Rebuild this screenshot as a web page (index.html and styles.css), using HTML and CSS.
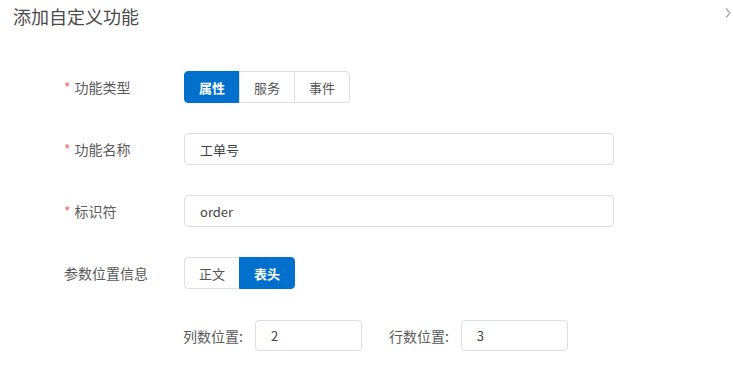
FILE: index.html
```html
<!DOCTYPE html>
<html lang="zh-CN">
<head>
    <meta charset="UTF-8">
    <title>添加自定义功能</title>
    <link rel="stylesheet" href="styles.css">
</head>
<body>
    <div class="header">
        <span class="title">添加自定义功能</span>
        <svg class="chevron" width="8" height="12" viewBox="0 0 8 12">
            <path d="M2 1.5 L6 6 L2 10.5" fill="none" stroke="#a0a4ab" stroke-width="1.2"/>
        </svg>
    </div>

    <div class="form">
        <div class="form-row">
            <label class="form-label"><span class="required">*</span>功能类型</label>
            <div class="btn-group">
                <button class="seg active">属性</button>
                <button class="seg">服务</button>
                <button class="seg">事件</button>
            </div>
        </div>

        <div class="form-row">
            <label class="form-label"><span class="required">*</span>功能名称</label>
            <input class="text-input" type="text" value="工单号">
        </div>

        <div class="form-row">
            <label class="form-label"><span class="required">*</span>标识符</label>
            <input class="text-input" type="text" value="order">
        </div>

        <div class="form-row">
            <label class="form-label">参数位置信息</label>
            <div class="btn-group">
                <button class="seg">正文</button>
                <button class="seg active">表头</button>
            </div>
        </div>

        <div class="sub-row">
            <div class="sub-item">
                <label class="sub-label">列数位置:</label>
                <input class="small-input" type="text" value="2">
            </div>
            <div class="sub-item">
                <label class="sub-label">行数位置:</label>
                <input class="small-input" type="text" value="3">
            </div>
        </div>
    </div>
</body>
</html>
```

FILE: styles.css
```css
body {
    margin: 0;
    font-family: "Noto Sans CJK SC", "Liberation Sans", sans-serif;
    background: #ffffff;
    color: #555;
}
.header {
    display: flex;
    justify-content: space-between;
    align-items: flex-start;
    padding: 4px 1px 0 13px;
    height: 26px;
}
.title {
    font-size: 18px;
    line-height: 24px;
    color: #4a4a4a;
}
.chevron {
    margin-top: 3px;
}
.form {
    margin-top: 41px;
    padding-left: 64px;
}
.form-row {
    display: flex;
    align-items: center;
    height: 32px;
    margin-bottom: 30px;
}
.form-label {
    width: 120px;
    font-size: 14px;
    color: #5a5a5a;
}
.required {
    color: #f56c6c;
    margin-right: 4px;
}
.btn-group {
    display: flex;
}
.seg {
    width: 56px;
    height: 32px;
    margin-left: -1px;
    border: 1px solid #dcdfe6;
    background: #ffffff;
    color: #555;
    font-family: inherit;
    font-size: 13px;
    padding: 0;
}
.seg:first-child {
    margin-left: 0;
    border-radius: 4px 0 0 4px;
}
.seg:last-child {
    border-radius: 0 4px 4px 0;
}
.seg.active {
    background: #0070cc;
    border-color: #0070cc;
    color: #ffffff;
    font-weight: bold;
}
.text-input {
    box-sizing: border-box;
    width: 430px;
    height: 32px;
    border: 1px solid #dcdfe6;
    border-radius: 4px;
    padding: 0 15px;
    font-family: inherit;
    font-size: 13px;
    color: #444;
}
.sub-row {
    display: flex;
    gap: 27px;
    padding-left: 119px;
    padding-top: 1px;
}
.sub-item {
    display: flex;
    align-items: center;
}
.sub-label {
    font-size: 14px;
    color: #5a5a5a;
    margin-right: 12px;
}
.small-input {
    box-sizing: border-box;
    width: 107px;
    height: 31px;
    border: 1px solid #dcdfe6;
    border-radius: 4px;
    padding: 0 15px;
    font-family: inherit;
    font-size: 13px;
    color: #444;
}
```
